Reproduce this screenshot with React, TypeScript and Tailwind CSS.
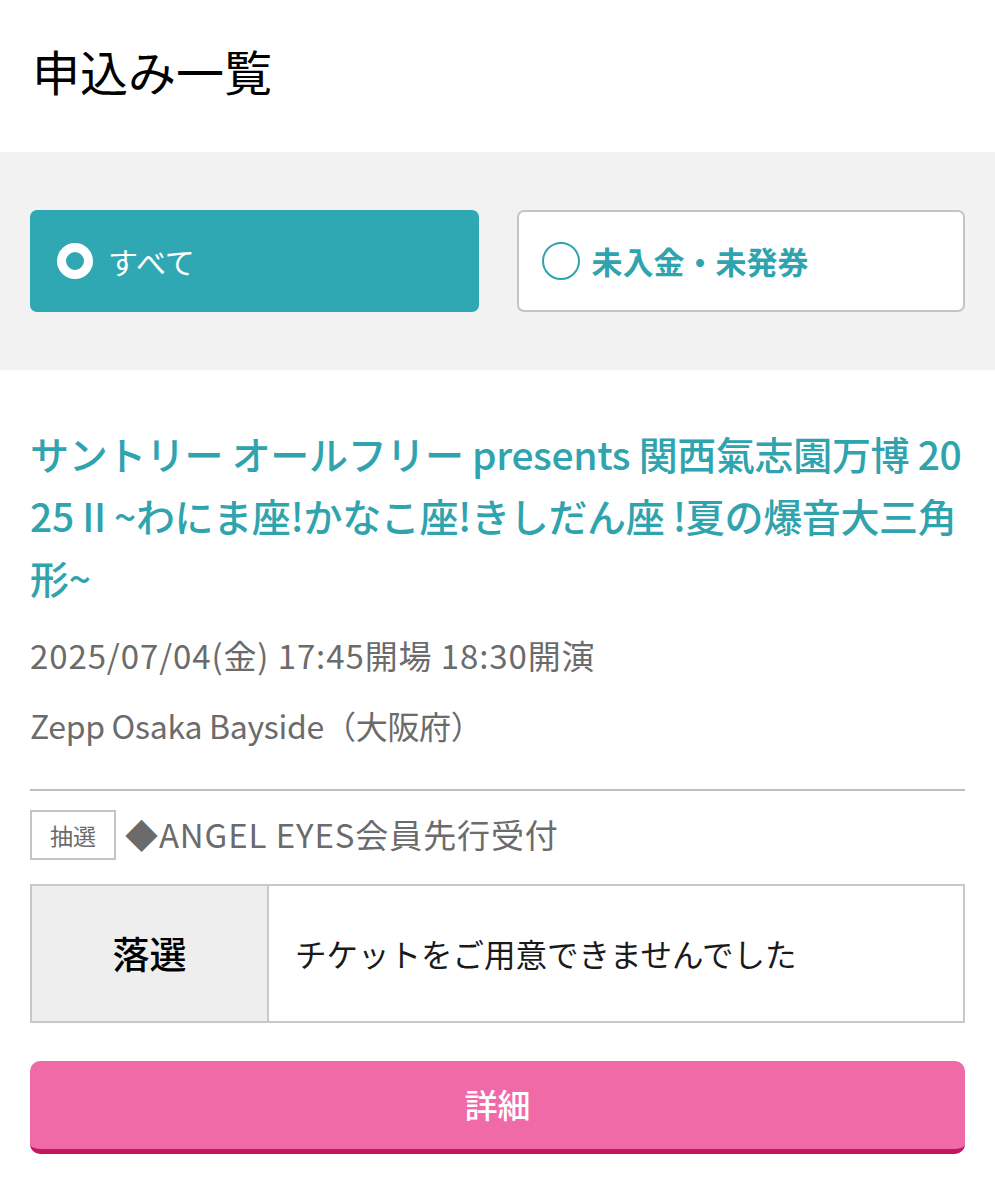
export default function App() {
    return (
        <div
            className="w-[995px] min-h-[1200px] bg-white text-black"
            style={{ fontFamily: '"Noto Sans CJK JP", "Noto Sans", sans-serif' }}
        >
            <div className="h-[152px] px-[32px] pt-[46px]">
                <h1 className="text-[48px] leading-none font-normal">申込み一覧</h1>
            </div>

            <div className="bg-[#f2f2f2] px-[30px] py-[58px] grid grid-cols-2 gap-[38px]">
                <button className="h-[102px] rounded-[7px] bg-[#2fa8b3] flex items-center px-[27px] gap-[15px]">
                    <span className="w-[36px] h-[36px] rounded-full border-[9px] border-white bg-[#2fa8b3]" />
                    <span className="text-white text-[30px] font-normal">すべて</span>
                </button>
                <button className="h-[102px] rounded-[7px] bg-white border-2 border-[#c4c4c4] flex items-center px-[23px] gap-[12px]">
                    <span className="w-[38px] h-[38px] rounded-full border-2 border-[#2fa3ae]" />
                    <span className="text-[#2fa3ae] text-[31px] font-bold">未入金・未発券</span>
                </button>
            </div>

            <div className="px-[30px] pt-[52px]">
                <h2 className="text-[#2fa3ae] text-[39px] leading-[62px] font-medium tracking-[-0.35px] break-all">
                    サントリー オールフリー presents 関西氣志園万博 2025 II ~わにま座!かなこ座!きしだん座 !夏の爆音大三角形~
                </h2>
                <p className="mt-[23px] text-[#6b6b6b] text-[33px] leading-[48px] tracking-[0.9px]">
                    2025/07/04(金) 17:45開場 18:30開演
                </p>
                <p className="mt-[22px] text-[#6b6b6b] text-[32px] leading-[48px] tracking-[-0.3px]">
                    Zepp Osaka Bayside（大阪府）
                </p>
                <div className="mt-[40px] h-[2px] bg-[#bdbdbd]" />

                <div className="mt-[19px] flex items-center gap-[9px]">
                    <span className="h-[50px] w-[86px] border-2 border-[#c4c4c4] flex items-center justify-center text-[#6b6b6b] text-[23px]">
                        抽選
                    </span>
                    <span className="text-[#6b6b6b] text-[33px] tracking-[0.9px]">◆ANGEL EYES会員先行受付</span>
                </div>

                <div className="mt-[24px] h-[139px] flex border-2 border-[#c8c8c8]">
                    <div className="w-[237px] bg-[#eeeeee] border-r-2 border-[#c8c8c8] flex items-center justify-center text-[37px] font-medium">
                        落選
                    </div>
                    <div className="flex-1 flex items-center px-[26px] text-[31.5px] text-[#1a1a1a]">
                        チケットをご用意できませんでした
                    </div>
                </div>

                <button className="mt-[38px] w-full h-[93px] rounded-[10px] bg-[#f06aa8] border-b-[5px] border-[#c2185b] text-white text-[33px] font-medium">
                    詳細
                </button>
            </div>
        </div>
    );
}
